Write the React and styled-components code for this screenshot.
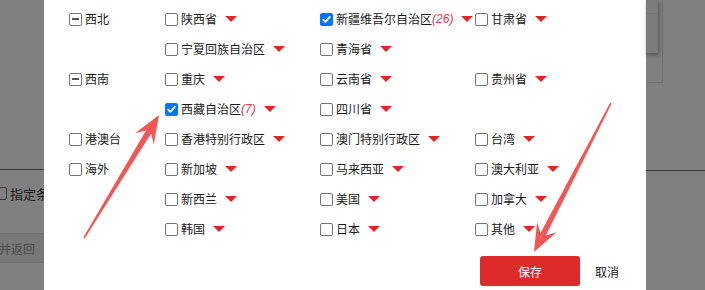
import React from 'react';
import styled, { createGlobalStyle } from 'styled-components';

const GlobalStyle = createGlobalStyle`
  html, body {
    margin: 0;
    padding: 0;
    background: #808080;
  }
  body {
    font-family: "Noto Sans CJK SC", "Noto Sans", sans-serif;
  }
`;

const groups = [
  {
    name: '西北',
    mode: 'minus',
    items: [
      { label: '陕西省' },
      { label: '新疆维吾尔自治区', count: 26, checked: true },
      { label: '甘肃省' },
      { label: '宁夏回族自治区' },
      { label: '青海省' },
    ],
  },
  {
    name: '西南',
    mode: 'minus',
    items: [
      { label: '重庆' },
      { label: '云南省' },
      { label: '贵州省' },
      { label: '西藏自治区', count: 7, checked: true },
      { label: '四川省' },
    ],
  },
  {
    name: '港澳台',
    mode: 'box',
    items: [{ label: '香港特别行政区' }, { label: '澳门特别行政区' }, { label: '台湾' }],
  },
  {
    name: '海外',
    mode: 'box',
    items: [
      { label: '新加坡' },
      { label: '马来西亚' },
      { label: '澳大利亚' },
      { label: '新西兰' },
      { label: '美国' },
      { label: '加拿大' },
      { label: '韩国' },
      { label: '日本' },
      { label: '其他' },
    ],
  },
];

// tail -> tip, returns polygon points for a tapered annotation arrow
function arrowPoints(tx, ty, px, py) {
  const dx = px - tx;
  const dy = py - ty;
  const len = Math.hypot(dx, dy);
  const ux = dx / len;
  const uy = dy / len;
  const nx = -uy;
  const ny = ux;
  const at = (u, v) => `${(tx + ux * u + nx * v).toFixed(1)},${(ty + uy * u + ny * v).toFixed(1)}`;
  return [
    at(0, -0.8),
    at(len - 20, -3),
    at(len - 28, -11),
    at(len, 0),
    at(len - 28, 11),
    at(len - 20, 3),
    at(0, 0.8),
  ].join(' ');
}

const Page = styled.div`
  position: relative;
  width: 705px;
  height: 290px;
  overflow: hidden;
  display: flex;
  background: #808080;
`;

const LeftShade = styled.div`
  width: 44px;
  flex: none;
  display: flex;
  flex-direction: column;
`;

const Divider = styled.div`
  height: 1px;
  margin-top: ${(p) => p.$top}px;
  background: #3b3b3b;
`;

const ShadeCheckRow = styled.div`
  margin-top: 17px;
  margin-left: -6px;
  display: flex;
  align-items: center;
  gap: 3px;
  height: 13px;
  font-size: 13px;
  color: #1c1c1c;
  white-space: nowrap;
`;

const ShadeBox = styled.span`
  width: 11px;
  height: 11px;
  border: 1px solid #3a3a3a;
  border-radius: 2px;
  flex: none;
`;

const ShadeButton = styled.div`
  margin-top: 33px;
  height: 28px;
  border-top: 1px solid #707070;
  border-bottom: 1px solid #707070;
  background: #787878;
  display: flex;
  align-items: center;
  margin-left: -1px;
  font-size: 12px;
  color: #4c4c4c;
  white-space: nowrap;
`;

const RightShade = styled.div`
  flex: 1;
  display: flex;
  flex-direction: column;
`;

const OuterFrame = styled.div`
  width: 16px;
  height: 82px;
  border-right: 1px solid #717171;
  border-bottom: 1px solid #717171;
`;

const InnerCard = styled.div`
  width: 12px;
  height: 53px;
  background: #7c7c7c;
  box-shadow: 1px 2px 4px rgba(0, 0, 0, 0.35);
`;

const CardHead = styled.div`
  height: 13px;
  border-bottom: 1px solid #737373;
`;

const Dialog = styled.div`
  width: 602px;
  flex: none;
  background: #fff;
  padding: 4px 27px 0 25px;
  box-sizing: border-box;
  display: flex;
  flex-direction: column;
`;

const Group = styled.div`
  display: flex;
`;

const RegionCell = styled.div`
  width: 96px;
  height: 30px;
  flex: none;
  display: flex;
  align-items: center;
  gap: 3px;
`;

const ProvinceGrid = styled.div`
  display: grid;
  grid-template-columns: repeat(3, 155px);
  grid-auto-rows: 30px;
`;

const Item = styled.div`
  display: flex;
  align-items: center;
  gap: 3px;
  white-space: nowrap;
`;

const Box = styled.span`
  width: 13px;
  height: 13px;
  box-sizing: border-box;
  flex: none;
  border-radius: 2px;
  border: 1px solid ${(p) => (p.$checked ? '#0075ff' : '#767676')};
  background: ${(p) => (p.$checked ? '#0075ff' : '#fff')};
  display: flex;
  align-items: center;
  justify-content: center;
`;

const MinusBox = styled.span`
  width: 13px;
  height: 13px;
  box-sizing: border-box;
  flex: none;
  border-radius: 2px;
  border: 1px solid #7a7a7a;
  display: flex;
  align-items: center;
  justify-content: center;
  &::after {
    content: '';
    width: 7px;
    height: 2px;
    background: #555;
  }
`;

const Label = styled.span`
  font-size: 12px;
  line-height: 14px;
  color: #1a1a1a;
`;

const Count = styled.span`
  font-family: "Liberation Sans", Arial, sans-serif;
  font-style: italic;
  font-size: 12px;
  color: #e5354a;
  margin-left: -3px;
`;

const Caret = styled.span`
  width: 0;
  height: 0;
  flex: none;
  margin-left: 5px;
  border-left: 6px solid transparent;
  border-right: 6px solid transparent;
  border-top: 6px solid #e02727;
`;

const Footer = styled.div`
  margin-top: 12px;
  display: flex;
  justify-content: flex-end;
  align-items: center;
  gap: 15px;
`;

const SaveButton = styled.button`
  width: 100px;
  height: 30px;
  border: none;
  border-radius: 3px;
  background: #de2a2a;
  color: #fff;
  font-family: inherit;
  font-size: 12px;
  padding: 0;
`;

const CancelText = styled.span`
  font-size: 12px;
  color: #1a1a1a;
`;

const ArrowLayer = styled.svg`
  position: absolute;
  left: 0;
  top: 0;
  pointer-events: none;
`;

const Check = () => (
  <svg width="11" height="11" viewBox="0 0 11 11">
    <path d="M2.2 5.6 L4.4 7.8 L8.8 2.8" fill="none" stroke="#fff" strokeWidth="1.8" strokeLinecap="round" strokeLinejoin="round" />
  </svg>
);

const Province = ({ label, count, checked }) => (
  <Item>
    <Box $checked={checked}>{checked && <Check />}</Box>
    <Label>{label}</Label>
    {count != null && <Count>({count})</Count>}
    <Caret />
  </Item>
);

export default function App() {
  return (
    <>
      <GlobalStyle />
      <Page>
        <LeftShade>
          <Divider $top={169} />
          <ShadeCheckRow>
            <ShadeBox />
            <span>指定条件</span>
          </ShadeCheckRow>
          <ShadeButton>并返回</ShadeButton>
        </LeftShade>
        <Dialog>
          {groups.map((g) => (
            <Group key={g.name}>
              <RegionCell>
                {g.mode === 'minus' ? <MinusBox /> : <Box />}
                <Label>{g.name}</Label>
              </RegionCell>
              <ProvinceGrid>
                {g.items.map((it) => (
                  <Province key={it.label} {...it} />
                ))}
              </ProvinceGrid>
            </Group>
          ))}
          <Footer>
            <SaveButton>保存</SaveButton>
            <CancelText>取消</CancelText>
          </Footer>
        </Dialog>
        <RightShade>
          <OuterFrame>
            <InnerCard>
              <CardHead />
            </InnerCard>
          </OuterFrame>
          <Divider $top={87} />
        </RightShade>
        <ArrowLayer width="705" height="290" viewBox="0 0 705 290">
          <polygon points={arrowPoints(84, 238, 159, 115)} fill="#f45656" />
          <polygon points={arrowPoints(611, 103, 534, 252)} fill="#f45656" />
        </ArrowLayer>
      </Page>
    </>
  );
}
